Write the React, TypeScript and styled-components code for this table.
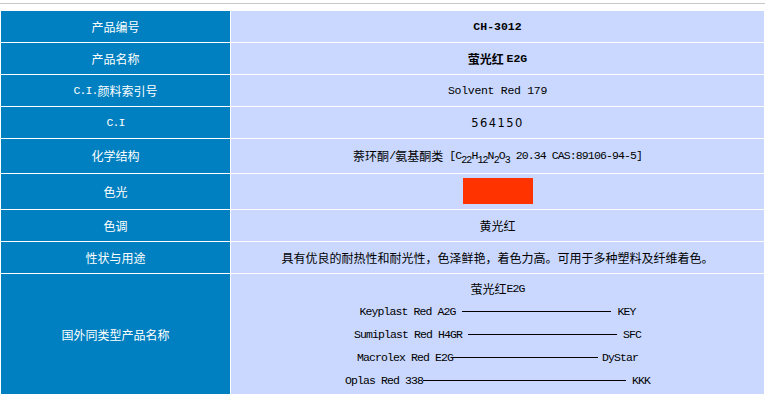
import * as React from 'react';
import styled, { createGlobalStyle } from 'styled-components';

const GlobalStyle = createGlobalStyle`
  body {
    margin: 0;
    background: #ffffff;
    font-family: "Noto Sans CJK SC", sans-serif;
  }
`;

const Page = styled.div`
  width: 766px;
  padding-top: 3px;
`;

const TopRule = styled.div`
  width: 765px;
  height: 1px;
  background: #c8c8c8;
  margin-bottom: 6px;
`;

const Sheet = styled.div`
  display: grid;
  grid-template-columns: 229px 533px;
  gap: 1px;
  padding: 1px;
  width: max-content;
  background: #ffffff;
`;

const Label = styled.div<{ $h: number }>`
  height: ${p => p.$h}px;
  display: flex;
  align-items: center;
  justify-content: center;
  background: #0080c0;
  color: #ffffff;
  font-size: 12px;
  line-height: 16px;
`;

const Value = styled.div<{ $bold?: boolean }>`
  display: flex;
  align-items: center;
  justify-content: center;
  background: #cad8ff;
  color: #000000;
  font-size: 12px;
  line-height: 16px;
  font-weight: ${p => (p.$bold ? 700 : 400)};
  white-space: pre;
`;

// half-width latin text, spaced so each letter takes about 6px
const Mono = styled.span<{ $track?: number }>`
  font-family: "Liberation Mono", "Noto Sans CJK SC", monospace;
  font-size: 11.5px;
  letter-spacing: ${p => (p.$track ?? -0.9)}px;
`;

const Digits = styled.span`
  font-family: "DejaVu Sans", sans-serif;
  font-size: 11.5px;
  letter-spacing: 1.4px;
`;

const Sub = styled.sub`
  font-size: 10px;
  line-height: 0;
  vertical-align: -4px;
`;

const Swatch = styled.div`
  width: 70px;
  height: 26px;
  background: #ff3300;
  margin-top: -1px;
`;

const RivalList = styled.div`
  display: flex;
  flex-direction: column;
  align-items: center;
  padding: 3px 0 4px;
  line-height: 23px;
`;

const RivalLine = styled.div`
  display: flex;
  align-items: center;
  height: 23px;
`;

const Dash = styled.span<{ $w: number; $l: number; $r: number }>`
  width: ${p => p.$w}px;
  height: 1px;
  margin: 0 ${p => p.$r}px 0 ${p => p.$l}px;
  background: #000000;
`;

const rivals = [
  { name: 'Keyplast Red A2G', maker: 'KEY', w: 149, l: 6, r: 7 },
  { name: 'Sumiplast Red H4GR', maker: 'SFC', w: 149, l: 6, r: 6 },
  { name: 'Macrolex Red E2G', maker: 'DyStar', w: 145, l: 0, r: 4 },
  { name: 'Oplas Red 338', maker: 'KKK', w: 203, l: 0, r: 6 },
];

const App: React.FC = () => {
  return (
    <Page>
      <GlobalStyle />
      <TopRule />
      <Sheet>
        <Label $h={31}>产品编号</Label>
        <Value $bold>
          <Mono $track={0}>CH-3012</Mono>
        </Value>

        <Label $h={31}>产品名称</Label>
        <Value $bold>
          萤光红 <Mono $track={0}>E2G</Mono>
        </Value>

        <Label $h={31}>
          <Mono>C.I.</Mono>颜料索引号
        </Label>
        <Value>
          <Mono $track={-0.3}>Solvent Red 179</Mono>
        </Value>

        <Label $h={31}>
          <Mono>C.I</Mono>
        </Label>
        <Value>
          <Digits>564150</Digits>
        </Value>

        <Label $h={34}>化学结构</Label>
        <Value>
          萘环酮<Mono>/</Mono>氨基酮类
          <Mono>
            {' ['}C<Sub>22</Sub>H<Sub>12</Sub>N<Sub>2</Sub>O<Sub>3</Sub>
            {' 20.34 CAS:89106-94-5]'}
          </Mono>
        </Value>

        <Label $h={35}>色光</Label>
        <Value>
          <Swatch />
        </Value>

        <Label $h={31}>色调</Label>
        <Value>黄光红</Value>

        <Label $h={31}>性状与用途</Label>
        <Value>具有优良的耐热性和耐光性，色泽鲜艳，着色力高。可用于多种塑料及纤维着色。</Value>

        <Label $h={122}>国外同类型产品名称</Label>
        <Value>
          <RivalList>
            <RivalLine>
              萤光红<Mono>E2G</Mono>
            </RivalLine>
            {rivals.map(r => (
              <RivalLine key={r.name}>
                <Mono>{r.name}</Mono>
                <Dash $w={r.w} $l={r.l} $r={r.r} />
                <Mono>{r.maker}</Mono>
              </RivalLine>
            ))}
          </RivalList>
        </Value>
      </Sheet>
    </Page>
  );
};

export default App;
